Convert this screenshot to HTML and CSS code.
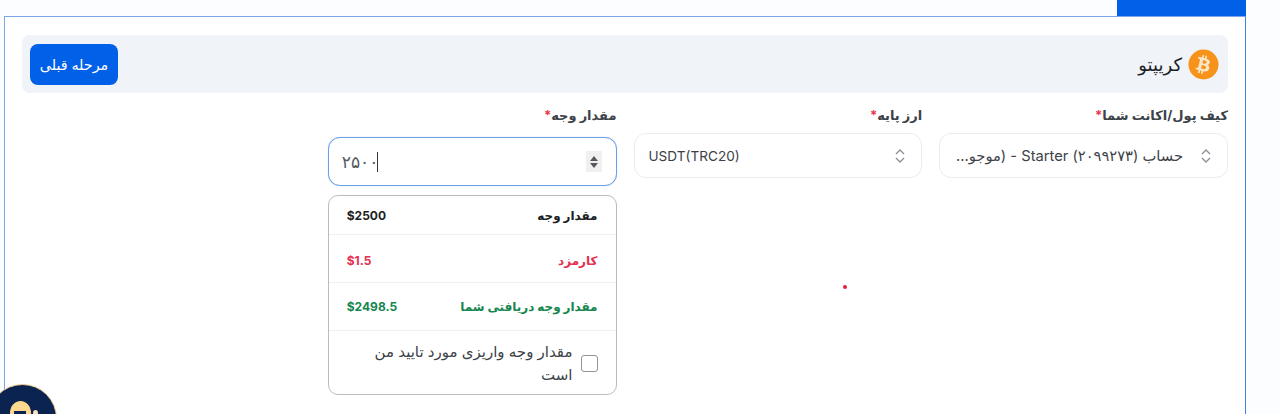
FILE: index.html
```html
<!DOCTYPE html>
<html lang="fa">
<head>
  <meta charset="UTF-8">
  <meta name="viewport" content="width=device-width, initial-scale=1.0">
  <title>کریپتو</title>
  <link rel="stylesheet" href="styles.css">
</head>
<body>
  <div class="page" dir="rtl">
    <div class="tab-row"><div class="tab"></div></div>
    <div class="panel">
      <div class="panel-head">
        <div class="method">
          <svg class="btc" viewBox="0 0 32 32" width="31" height="31">
            <circle cx="16" cy="16" r="15.5" fill="#f7931a"/>
            <path fill="#fbe6c8" fill-rule="evenodd" d="M22.6 14c.3-2.1-1.3-3.2-3.5-4l.7-2.8-1.7-.4-.7 2.7-1.4-.3.7-2.7-1.7-.4-.7 2.8-3.4-.8-.5 1.8s1.3.3 1.2.3c.7.2.8.6.8 1l-1.9 7.7c-.1.2-.3.5-.8.4 0 0-1.2-.3-1.2-.3l-.9 2 3.3.8-.7 2.8 1.7.4.7-2.8 1.4.4-.7 2.8 1.7.4.7-2.8c2.9.5 5.1.3 6-2.3.7-2.1 0-3.3-1.5-4.1 1.1-.3 2-1 2.2-2.6zm-3.9 5.4c-.5 2.1-4 1-5.2.7l.9-3.7c1.2.3 4.8.9 4.3 3zm.5-5.4c-.5 1.9-3.4.9-4.3.7l.8-3.3c1 .2 4 .7 3.5 2.6z"/>
          </svg>
          <span>کریپتو</span>
        </div>
        <button class="btn-back" type="button">مرحله قبلی</button>
      </div>

      <div class="fields">
        <div class="field">
          <label class="field-label">کیف پول/اکانت شما<em>*</em></label>
          <div class="select">
            <svg class="updown" viewBox="0 0 12 18" width="12" height="18"><path d="M2 7l4-4 4 4M2 11l4 4 4-4"/></svg>
            <span class="select-text">حساب (۲۰۹۹۲۷۳) Starter - (موجو...</span>
          </div>
        </div>
        <div class="field">
          <label class="field-label">ارز پایه<em>*</em></label>
          <div class="select">
            <svg class="updown" viewBox="0 0 12 18" width="12" height="18"><path d="M2 7l4-4 4 4M2 11l4 4 4-4"/></svg>
            <span class="select-text ltr">USDT(TRC20)</span>
          </div>
        </div>
        <div class="field">
          <label class="field-label">مقدار وجه<em>*</em></label>
          <div class="amount">
            <span class="spinner">
              <svg viewBox="0 0 10 18" width="10" height="18"><path d="M5 3l4 5H1zM5 15l4-5H1z"/></svg>
            </span>
            <span class="amount-value"><span class="caret"></span>۲۵۰۰</span>
          </div>
          <div class="summary">
            <div class="row"><b>مقدار وجه</b><b class="sum">$2500</b></div>
            <div class="row row-fee"><b>کارمزد</b><b class="sum">$1.5</b></div>
            <div class="row row-net"><b>مقدار وجه دریافتی شما</b><b class="sum">$2498.5</b></div>
            <div class="confirm">
              <span class="check"></span>
              <span class="confirm-text">مقدار وجه واریزی مورد تایید من است</span>
            </div>
          </div>
        </div>
      </div>
    </div>
  </div>

  <span class="dot"></span>
  <div class="avatar"><span class="avatar-face"></span><span class="avatar-spot"></span></div>
</body>
</html>
```

FILE: styles.css
```css
* {
  box-sizing: border-box;
}
html, body {
  height: 100%;
}
body {
  margin: 0;
  background: #fcfdfe;
  color: #212529;
  font-family: 'Inter', 'DejaVu Sans', sans-serif;
  overflow: hidden;
}
.page {
  width: 1242px;
  height: 414px;
  margin-left: 4px;
  overflow: hidden;
}
.tab-row {
  display: flex;
  height: 16px;
}
.tab {
  width: 129px;
  height: 16px;
  background: #0160e8;
}
.panel {
  height: 420px;
  padding: 18px 17px 0 17px;
  background: #fff;
  border: 1px solid #7ba6ea;
  border-right-color: #3f82e6;
}
.panel-head {
  display: flex;
  justify-content: space-between;
  align-items: center;
  height: 58px;
  padding: 0 9px 0 8px;
  background: #f0f3f8;
  border-radius: 8px;
}
.method {
  display: flex;
  align-items: center;
  gap: 6px;
  font-size: 18px;
  color: #1b1f24;
}
.btn-back {
  width: 88px;
  height: 41px;
  padding: 0;
  background: #0160e8;
  color: #fff;
  border: none;
  border-radius: 8px;
  font-family: inherit;
  font-size: 14.3px;
  font-weight: 500;
}
.fields {
  display: grid;
  grid-template-columns: repeat(4, 1fr);
  column-gap: 17px;
  margin-top: 13px;
}
.field-label {
  display: block;
  height: 19px;
  margin-bottom: 8px;
  font-size: 13px;
  font-weight: 700;
  line-height: 19px;
  color: #3c4248;
}
.field-label em {
  color: #e8364f;
  font-style: normal;
}
.select {
  display: flex;
  align-items: center;
  height: 45px;
  padding: 0 15px 0 14px;
  gap: 17px;
  background: #fff;
  border: 1px solid #e9ecef;
  border-radius: 12px;
  font-size: 14.7px;
  color: #3c4248;
}
.select-text {
  flex: 1;
  white-space: nowrap;
  overflow: hidden;
}
.select-text.ltr {
  font-size: 13.6px;
  text-align: left;
  direction: ltr;
}
.updown {
  flex: none;
  fill: none;
  stroke: #8a9199;
  stroke-width: 1.4;
}
.amount {
  display: flex;
  align-items: center;
  justify-content: space-between;
  height: 49px;
  margin-top: 12px;
  padding: 0 14px 0 13px;
  background: #fff;
  border: 1px solid #6b9fe6;
  border-radius: 12px;
  box-shadow: 0 0 1px #9dbff0;
}
.spinner {
  display: flex;
  align-items: center;
  justify-content: center;
  width: 16px;
  height: 21px;
  background: #f0f0f0;
}
.spinner svg {
  fill: #55595e;
}
.amount-value {
  direction: ltr;
  display: flex;
  flex-direction: row-reverse;
  align-items: center;
  font-size: 17px;
  color: #555b62;
}
.caret {
  width: 1px;
  height: 20px;
  margin-left: -1px;
  background: #333;
}
.summary {
  margin-top: 9px;
  background: #fff;
  border: 1px solid #b9bcc0;
  border-radius: 10px;
}
.row {
  display: flex;
  justify-content: space-between;
  align-items: center;
  padding: 0 18px;
  height: 48px;
  font-size: 12px;
  color: #1b1f24;
  border-bottom: 1px solid #eef0f2;
}
.row:first-child {
  height: 39px;
}
.sum {
  direction: ltr;
  font-size: 12px;
}
.row-fee {
  padding-top: 3px;
  color: #e5304f;
}
.row-net {
  color: #16864f;
}
.confirm {
  display: flex;
  align-items: center;
  gap: 8px;
  padding: 9px 18px 8px;
  font-size: 15px;
  line-height: 23px;
  color: #3c4248;
}
.confirm-text {
  max-width: 215px;
}
.check {
  flex: none;
  width: 17px;
  height: 17px;
  border: 1px solid #8e9499;
  border-radius: 3px;
}
.dot {
  position: absolute;
  left: 843px;
  top: 285px;
  width: 4px;
  height: 4px;
  background: #e5203a;
  border-radius: 50%;
}
.avatar {
  position: absolute;
  left: -12px;
  top: 384px;
  width: 69px;
  height: 69px;
  background: #0b2350;
  border: 1px solid #f3cf8e;
  border-radius: 50%;
}
.avatar-face {
  position: absolute;
  left: 21px;
  top: 16px;
  width: 21px;
  height: 24px;
  background: #fcd98f;
  border-radius: 50%;
}
.avatar-face::after {
  content: "";
  position: absolute;
  left: 4px;
  top: 10px;
  width: 12px;
  height: 3px;
  background: #0b2350;
}
.avatar-spot {
  position: absolute;
  left: 44px;
  top: 25px;
  width: 5px;
  height: 6px;
  background: #f6e3b8;
  border-radius: 50%;
}
```
